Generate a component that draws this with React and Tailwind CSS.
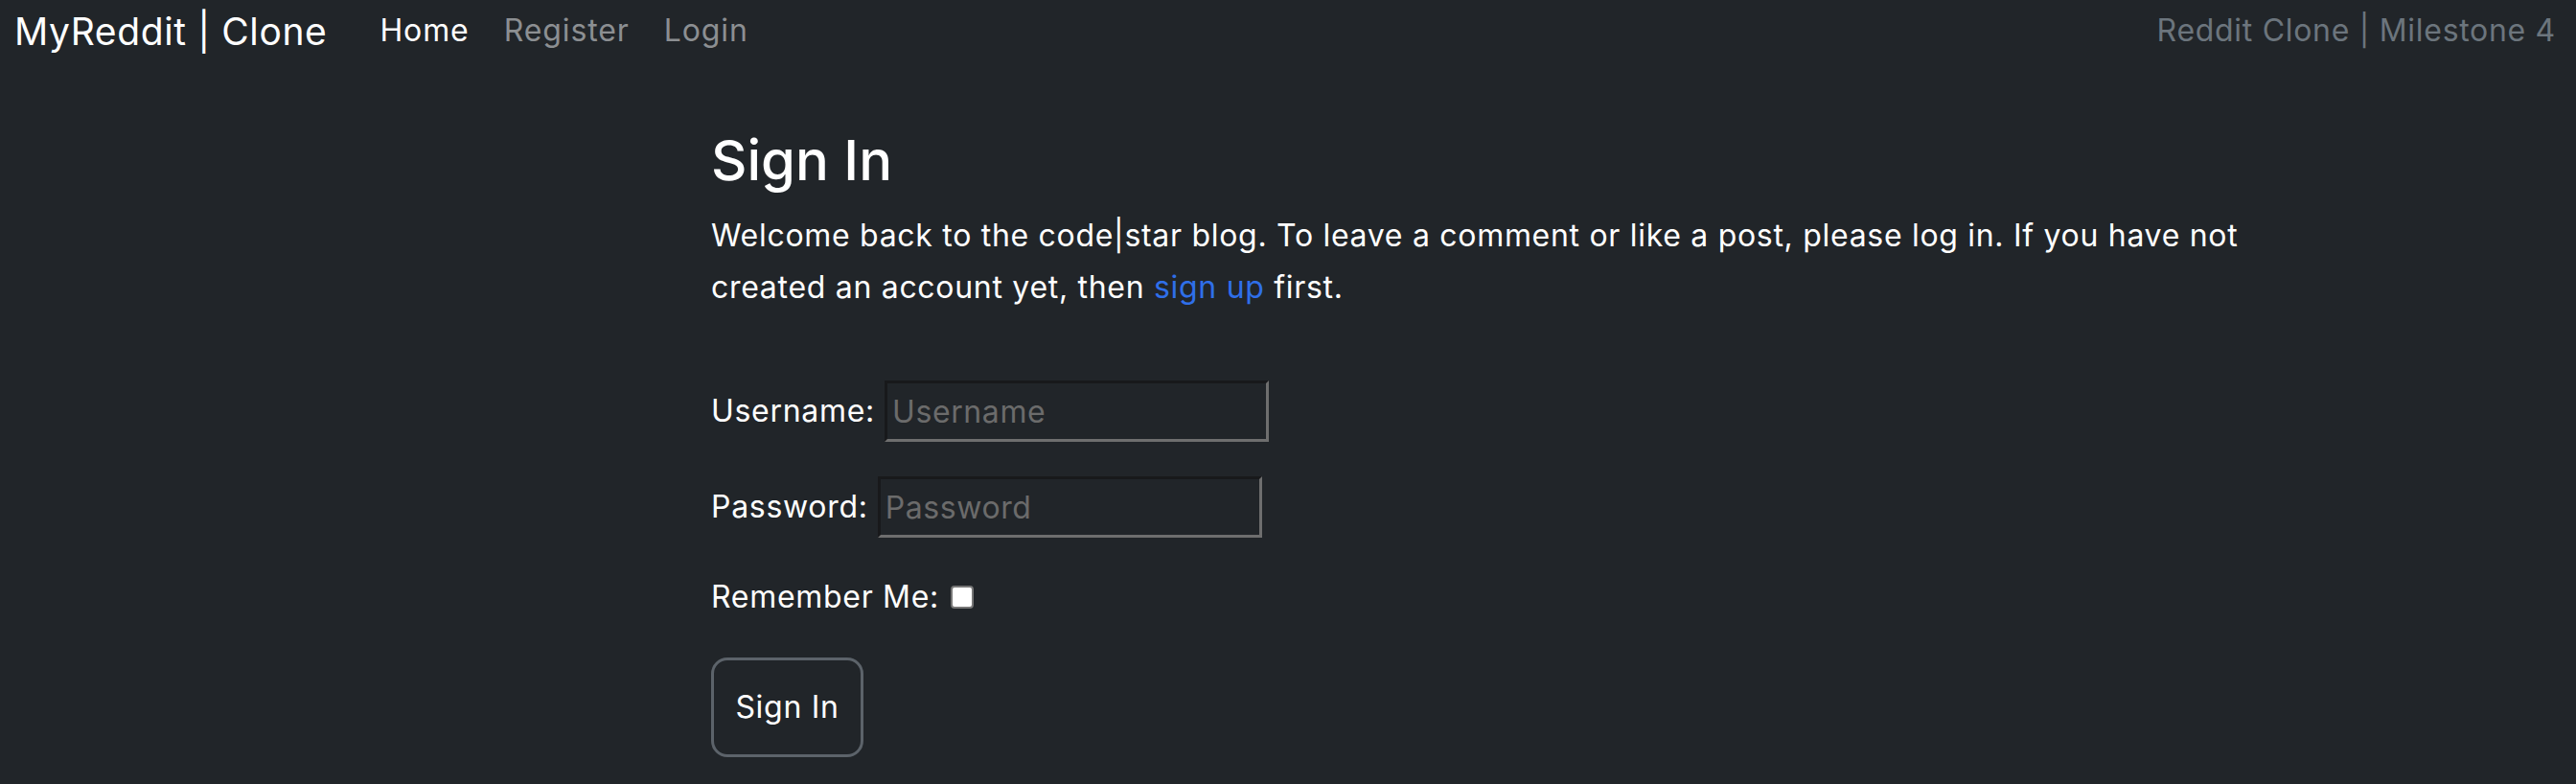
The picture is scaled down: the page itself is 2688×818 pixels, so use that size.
import { useState } from 'react';

// Sign-in page for the reddit clone — dark navbar + simple form.
function NavBar() {
  const links = [
    { label: 'Home', active: true },
    { label: 'Register' },
    { label: 'Login' },
  ];
  return (
    <nav className="flex h-16 items-center px-[15px]">
      <a className="text-[39px] leading-none tracking-[0.6px] text-white">MyReddit | Clone</a>
      <ul className="ml-[55px] flex items-center gap-[36px]">
        {links.map((l) => (
          <li
            key={l.label}
            className={`text-[32px] leading-none tracking-[0.9px] ${l.active ? 'text-white' : 'text-[#8c8f92]'}`}
          >
            {l.label}
          </li>
        ))}
      </ul>
      <span className="ml-auto pr-[6px] text-[32px] leading-none tracking-[0.7px] text-[#6c757d]">
        Reddit Clone | Milestone 4
      </span>
    </nav>
  );
}

function Field({ label, type }) {
  return (
    <div className="flex h-16 items-center gap-[10px]">
      <label className="text-[32px] leading-none tracking-[0.7px]">{label}:</label>
      <input
        type={type}
        placeholder={label}
        className="h-16 w-[401px] border-[3px] border-t-[#18191b] border-l-[#18191b] border-r-[#6e6e6e] border-b-[#6e6e6e] bg-[#212529] px-[5px] text-[32px] tracking-[0.6px] text-white outline-none placeholder:text-[#6b6b6b]"
      />
    </div>
  );
}

export default function App() {
  const [remember, setRemember] = useState(false);
  return (
    <div className="min-h-screen bg-[#212529] font-['Inter',sans-serif] text-white">
      <NavBar />
      <main className="ml-[742px] w-[1630px]">
        <h1 className="mt-[70px] text-[58px] font-medium leading-[67px]">Sign In</h1>
        <p className="mt-[18px] text-[32px] leading-[54px] tracking-[0.7px]">
          Welcome back to the code|star blog. To leave a comment or like a post, please log in. If you have not created an account yet, then{' '}
          <a className="text-[#2f6fe9]">sign up</a> first.
        </p>
        <form className="mt-[70px]" onSubmit={(e) => e.preventDefault()}>
          <Field label="Username" type="text" />
          <div className="mt-[36px]">
            <Field label="Password" type="password" />
          </div>
          <div className="mt-[47px] flex h-[30px] items-center gap-[12px]">
            <span className="text-[32px] leading-none tracking-[0.7px]">Remember Me:</span>
            <input
              type="checkbox"
              checked={remember}
              onChange={() => setRemember(!remember)}
              className="h-6 w-6 appearance-none rounded-[4px] border-2 border-[#767676] bg-white checked:bg-[#2f6fe9]"
            />
          </div>
          <button
            type="submit"
            className="mt-[48px] h-[104px] w-[159px] rounded-[17px] border-[3px] border-[#5c636a] text-[32px] tracking-[0.7px] text-white"
          >
            Sign In
          </button>
        </form>
      </main>
    </div>
  );
}
